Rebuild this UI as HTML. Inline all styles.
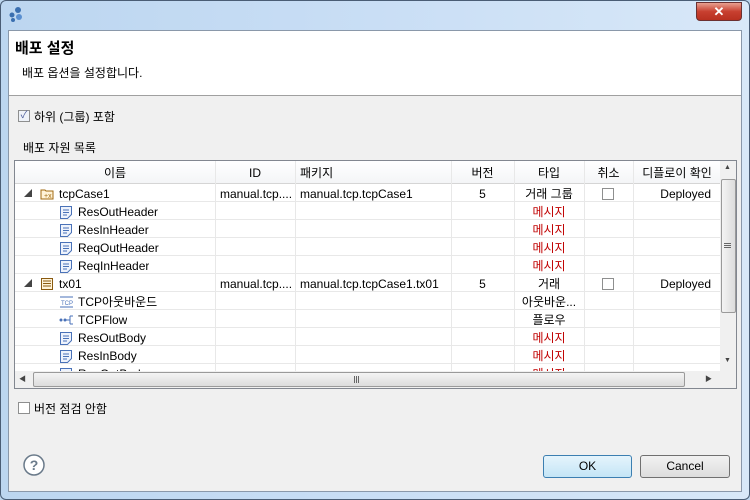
<!DOCTYPE html>
<html><head><meta charset="utf-8"><style>
*{margin:0;padding:0;box-sizing:border-box}
body{width:750px;height:500px;overflow:hidden;background:#bcd6ee;font-family:"Liberation Sans","Noto Sans CJK KR",sans-serif;font-size:12px;color:#000;position:relative}
.a{position:absolute}
.win{left:0;top:0;width:750px;height:500px;border:1px solid #4a5d75;border-radius:6px;background:linear-gradient(90deg,#bcd6f0,#c9def5 50%,#d8e8f8);}
.client{left:8px;top:30px;width:734px;height:462px;background:#f0f0f0;border:1px solid #8a98aa}
.hdr{left:9px;top:31px;width:732px;height:65px;background:#fff;border-bottom:1px solid #a0a0a0}
.tbl{left:14px;top:160px;width:723px;height:229px;border:1px solid #828790;background:#fff;overflow:hidden}
.row{position:absolute;left:0;width:705px;height:18px;border-bottom:1px solid #e8e8e8}
.c{position:absolute;top:1px;height:18px;line-height:18px;white-space:nowrap;overflow:hidden;font-size:12px}
.vl{position:absolute;top:0;width:1px;background:#e8e8e8;height:210px}
.cb{position:absolute;width:12px;height:12px;border:1px solid #8e8f8f;background:#fff}
.btn{height:23px;border:1px solid #707070;border-radius:3px;text-align:center;line-height:21px;font-size:12px}
</style></head><body>
<div class="a win"></div>
<svg class="a" style="left:8px;top:6px" width="16" height="16"><circle cx="10" cy="4" r="3" fill="#3a6fb0"/><circle cx="4" cy="9" r="2.5" fill="#3a6fb0"/><circle cx="11" cy="11" r="3" fill="#5a8fd0"/><circle cx="5" cy="14" r="2" fill="#3a6fb0"/></svg>
<div class="a" style="left:696px;top:2px;width:46px;height:19px;border:1px solid #6b3030;border-radius:0 0 4px 4px;background:linear-gradient(#e8a090,#c84030 50%,#b83020);color:#fff;text-align:center;font-weight:bold;font-size:13px;line-height:17px">✕</div>
<div class="a client"></div>
<div class="a hdr"></div>
<div class="a" style="left:15px;top:37px;font-size:15px;font-weight:bold">배포 설정</div>
<div class="a" style="left:22px;top:64px">배포 옵션을 설정합니다.</div>
<div class="cb" style="left:18px;top:110px;background:#eef2f8;font-size:10px;line-height:10px;color:#4a5a9a;text-align:center">✓</div>
<div class="a" style="left:34px;top:108px">하위 (그룹) 포함</div>
<div class="a" style="left:23px;top:139px">배포 자원 목록</div>
<div class="a tbl">
 <div class="a" style="left:0;top:0;width:705px;height:23px;background:linear-gradient(#fff,#f4f5f7);border-bottom:1px solid #d5d5d5"></div>
 <div class="c" style="left:0;width:200px;top:3px;text-align:center">이름</div>
 <div class="c" style="left:200px;width:80px;top:3px;text-align:center">ID</div>
 <div class="c" style="left:285px;top:3px">패키지</div>
 <div class="c" style="left:436px;width:63px;top:3px;text-align:center">버전</div>
 <div class="c" style="left:499px;width:70px;top:3px;text-align:center">타입</div>
 <div class="c" style="left:569px;width:49px;top:3px;text-align:center">취소</div>
 <div class="c" style="left:618px;width:88px;top:3px;text-align:center">디플로이 확인</div>
 <div class="vl" style="left:200px"></div><div class="vl" style="left:280px"></div><div class="vl" style="left:436px"></div><div class="vl" style="left:499px"></div><div class="vl" style="left:569px"></div><div class="vl" style="left:618px"></div>
 <div style="position:absolute;left:0;top:23px">
  <div class="row" style="top:0"><span class="c" style="left:9px;font-size:8px;color:#444">◢</span><svg class="a" style="left:25px;top:3px" width="14" height="13"><path d="M1 3h4l1 1h7v8H1z" fill="#fff3d8" stroke="#a06a10"/><text x="4" y="11" font-size="7" fill="#a06a10">+x</text></svg><span class="c" style="left:44px">tcpCase1</span><span class="c" style="left:205px">manual.tcp....</span><span class="c" style="left:285px">manual.tcp.tcpCase1</span><span class="c" style="left:436px;width:63px;text-align:center">5</span><span class="c" style="left:499px;width:70px;text-align:center">거래 그룹</span><span class="cb" style="left:587px;top:4px"></span><span class="c" style="left:618px;width:78px;text-align:right">Deployed</span></div>
  <div class="row" style="top:18px"><svg class="a" style="left:44px;top:3px" width="14" height="14"><path d="M1.5 1.5h11v8l-4 4h-7z" fill="#eef3fc" stroke="#4a72b8"/><path d="M4 5h6M4 7.5h6M4 10h4" stroke="#4a72b8"/></svg><span class="c" style="left:63px">ResOutHeader</span><span class="c" style="left:499px;width:70px;text-align:center;color:#c00000">메시지</span></div>
  <div class="row" style="top:36px"><svg class="a" style="left:44px;top:3px" width="14" height="14"><path d="M1.5 1.5h11v8l-4 4h-7z" fill="#eef3fc" stroke="#4a72b8"/><path d="M4 5h6M4 7.5h6M4 10h4" stroke="#4a72b8"/></svg><span class="c" style="left:63px">ResInHeader</span><span class="c" style="left:499px;width:70px;text-align:center;color:#c00000">메시지</span></div>
  <div class="row" style="top:54px"><svg class="a" style="left:44px;top:3px" width="14" height="14"><path d="M1.5 1.5h11v8l-4 4h-7z" fill="#eef3fc" stroke="#4a72b8"/><path d="M4 5h6M4 7.5h6M4 10h4" stroke="#4a72b8"/></svg><span class="c" style="left:63px">ReqOutHeader</span><span class="c" style="left:499px;width:70px;text-align:center;color:#c00000">메시지</span></div>
  <div class="row" style="top:72px"><svg class="a" style="left:44px;top:3px" width="14" height="14"><path d="M1.5 1.5h11v8l-4 4h-7z" fill="#eef3fc" stroke="#4a72b8"/><path d="M4 5h6M4 7.5h6M4 10h4" stroke="#4a72b8"/></svg><span class="c" style="left:63px">ReqInHeader</span><span class="c" style="left:499px;width:70px;text-align:center;color:#c00000">메시지</span></div>
  <div class="row" style="top:90px"><span class="c" style="left:9px;font-size:8px;color:#444">◢</span><svg class="a" style="left:25px;top:3px" width="14" height="14"><rect x="1.5" y="1.5" width="11" height="11" fill="#fff3d8" stroke="#8a5a10"/><path d="M3 4h8M3 6.5h8M3 9h8" stroke="#8a5a10"/></svg><span class="c" style="left:44px">tx01</span><span class="c" style="left:205px">manual.tcp....</span><span class="c" style="left:285px">manual.tcp.tcpCase1.tx01</span><span class="c" style="left:436px;width:63px;text-align:center">5</span><span class="c" style="left:499px;width:70px;text-align:center">거래</span><span class="cb" style="left:587px;top:4px"></span><span class="c" style="left:618px;width:78px;text-align:right">Deployed</span></div>
  <div class="row" style="top:108px"><svg class="a" style="left:44px;top:3px" width="16" height="14"><path d="M1 2h13M1 12h13" stroke="#4a72b8"/><text x="2" y="10" font-size="6" fill="#4a72b8">TCP</text></svg><span class="c" style="left:63px">TCP아웃바운드</span><span class="c" style="left:499px;width:70px;text-align:center">아웃바운...</span></div>
  <div class="row" style="top:126px"><svg class="a" style="left:44px;top:3px" width="16" height="14"><circle cx="2" cy="7" r="1.5" fill="#4a72b8"/><circle cx="6" cy="7" r="1.5" fill="#4a72b8"/><path d="M7 7h4M11 3v8M11 3h3M11 11h3" stroke="#4a72b8"/></svg><span class="c" style="left:63px">TCPFlow</span><span class="c" style="left:499px;width:70px;text-align:center">플로우</span></div>
  <div class="row" style="top:144px"><svg class="a" style="left:44px;top:3px" width="14" height="14"><path d="M1.5 1.5h11v8l-4 4h-7z" fill="#eef3fc" stroke="#4a72b8"/><path d="M4 5h6M4 7.5h6M4 10h4" stroke="#4a72b8"/></svg><span class="c" style="left:63px">ResOutBody</span><span class="c" style="left:499px;width:70px;text-align:center;color:#c00000">메시지</span></div>
  <div class="row" style="top:162px"><svg class="a" style="left:44px;top:3px" width="14" height="14"><path d="M1.5 1.5h11v8l-4 4h-7z" fill="#eef3fc" stroke="#4a72b8"/><path d="M4 5h6M4 7.5h6M4 10h4" stroke="#4a72b8"/></svg><span class="c" style="left:63px">ResInBody</span><span class="c" style="left:499px;width:70px;text-align:center;color:#c00000">메시지</span></div>
  <div class="row" style="top:180px"><svg class="a" style="left:44px;top:3px" width="14" height="14"><path d="M1.5 1.5h11v8l-4 4h-7z" fill="#eef3fc" stroke="#4a72b8"/></svg><span class="c" style="left:63px">ReqOutBody</span><span class="c" style="left:499px;width:70px;text-align:center;color:#c00000">메시지</span></div>
 </div>
 <div class="a" style="left:705px;top:0;width:17px;height:210px;background:#f0f0f0"></div>
 <div class="a" style="left:706px;top:18px;width:15px;height:134px;border:1px solid #9a9a9a;border-radius:2px;background:linear-gradient(90deg,#f4f4f4,#dcdcdc)"></div>
 <div class="a" style="left:709px;top:82px;width:7px;height:5px;border-top:1px solid #666;border-bottom:1px solid #666"></div>
 <div class="a" style="left:709px;top:84px;width:7px;height:1px;background:#666"></div>
 <div class="a" style="left:709px;top:3px;font-size:7px;color:#444">▲</div>
 <div class="a" style="left:709px;top:196px;font-size:7px;color:#444">▼</div>
 <div class="a" style="left:0;top:210px;width:705px;height:17px;background:#f0f0f0"></div>
 <div class="a" style="left:18px;top:211px;width:652px;height:15px;border:1px solid #9a9a9a;border-radius:2px;background:linear-gradient(#f4f4f4,#dcdcdc)"></div>
 <div class="a" style="left:339px;top:215px;width:5px;height:7px;border-left:1px solid #666;border-right:1px solid #666"></div>
 <div class="a" style="left:341px;top:215px;width:1px;height:7px;background:#666"></div>
 <div class="a" style="left:4px;top:213px;font-size:7px;color:#444">◀</div>
 <div class="a" style="left:690px;top:213px;font-size:7px;color:#444">▶</div>
 <div class="a" style="left:705px;top:210px;width:17px;height:17px;background:#f0f0f0"></div>
</div>
<div class="cb" style="left:18px;top:402px"></div>
<div class="a" style="left:34px;top:400px">버전 점검 안함</div>
<svg class="a" style="left:22px;top:453px" width="24" height="24"><circle cx="12" cy="12" r="10" fill="#fff" stroke="#6a7a8a" stroke-width="1.5"/><text x="12" y="17" font-size="14" font-weight="bold" text-anchor="middle" fill="#6a7a8a" font-family="Liberation Sans">?</text></svg>
<div class="a btn" style="left:543px;top:455px;width:89px;border-color:#3c7fb1;background:linear-gradient(#e5f4fc,#c4e5f6)">OK</div>
<div class="a btn" style="left:640px;top:455px;width:90px;background:linear-gradient(#f2f2f2,#dddddd)">Cancel</div>
</body></html>
